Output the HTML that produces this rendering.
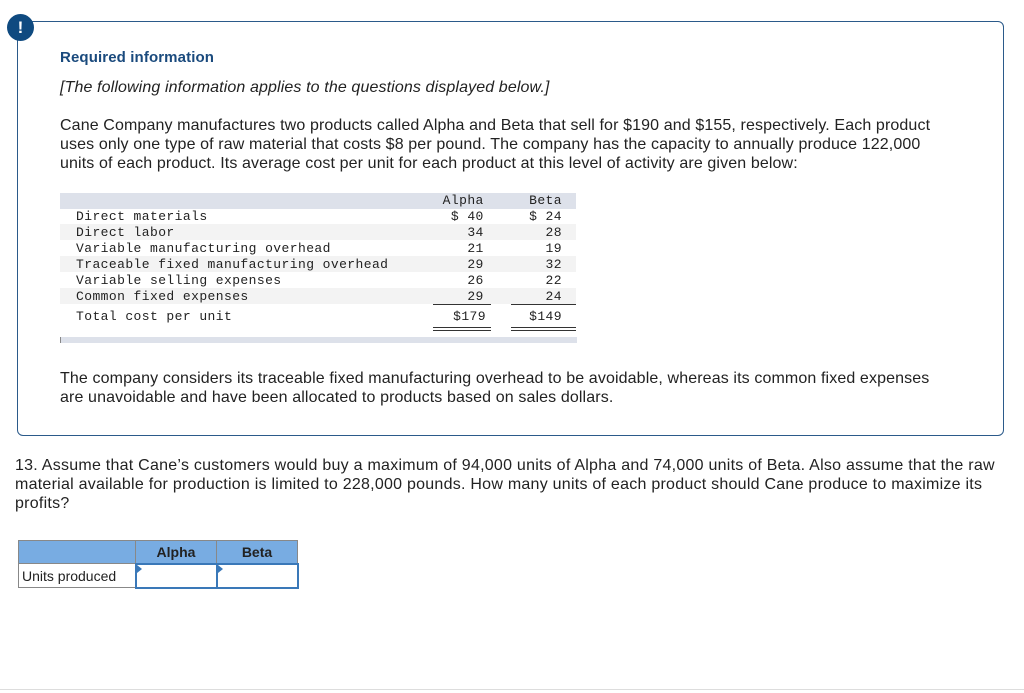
<!DOCTYPE html>
<html><head><style>
body{margin:0;width:1024px;height:693px;background:#fff;font-family:"Liberation Sans",sans-serif;color:#222;position:relative;overflow:hidden}
.box{position:absolute;left:17px;top:21px;width:985px;height:413px;border:1.5px solid #2b5a8a;border-radius:6px}
.icon{position:absolute;left:7px;top:14px;width:27px;height:27px;border-radius:50%;background:#0f4a80;color:#fff;font-weight:bold;font-size:17px;text-align:center;line-height:27px}
.t{position:absolute;font-size:16px;line-height:19px;letter-spacing:0.12px}
.mono{position:absolute;font-family:"Liberation Mono",monospace;font-size:13px;letter-spacing:0.42px;line-height:16px;color:#222}
.row{position:absolute;left:60px;width:516px;height:16px}
.ul{position:absolute;height:1px;background:#333}
table.a{position:absolute;left:18px;top:540px;border-collapse:collapse;font-size:14px}
table.a td{border:1.5px solid #888;padding:0}
</style></head><body>
<div class="box"></div>
<div class="icon">!</div>
<div class="t" style="left:60px;top:48px;font-weight:bold;color:#1a4a7d;font-size:15px">Required information</div>
<div class="t" style="left:60px;top:78px;font-style:italic">[The following information applies to the questions displayed below.]</div>
<div class="t" style="left:60px;top:116px;width:895px">Cane Company manufactures two products called Alpha and Beta that sell for $190 and $155, respectively. Each product uses only one type of raw material that costs $8 per pound. The company has the capacity to annually produce 122,000 units of each product. Its average cost per unit for each product at this level of activity are given below:</div>
<div class="row" style="top:193px;background:#dde1ea"></div>
<div class="row" style="top:224px;background:#f3f3f3"></div>
<div class="row" style="top:256px;background:#f3f3f3"></div>
<div class="row" style="top:288px;background:#f3f3f3"></div>
<div class="row" style="top:337px;height:6px;background:#dde1ea;border-left:1px solid #888"></div>
<div class="mono" style="left:76px;top:209px">Direct materials<br>Direct labor<br>Variable manufacturing overhead<br>Traceable fixed manufacturing overhead<br>Variable selling expenses<br>Common fixed expenses</div>
<div class="mono" style="left:76px;top:309px">Total cost per unit</div>
<div class="mono" style="left:430px;top:193px;width:62px;text-align:right;white-space:pre">Alpha 
$ 40 
34 
21 
29 
26 
29 </div>
<div class="mono" style="left:500px;top:193px;width:62px;text-align:right;white-space:pre">Beta
$ 24
28
19
32
22
24</div>
<div class="mono" style="left:430px;top:309px;width:56px;text-align:right">$179</div>
<div class="mono" style="left:500px;top:309px;width:62px;text-align:right">$149</div>
<div class="ul" style="left:433px;top:304px;width:58px"></div>
<div class="ul" style="left:511px;top:304px;width:65px"></div>
<div class="ul" style="left:433px;top:327px;width:58px"></div>
<div class="ul" style="left:433px;top:330px;width:58px"></div>
<div class="ul" style="left:511px;top:327px;width:65px"></div>
<div class="ul" style="left:511px;top:330px;width:65px"></div>
<div class="t" style="left:60px;top:369px;width:895px">The company considers its traceable fixed manufacturing overhead to be avoidable, whereas its common fixed expenses are unavoidable and have been allocated to products based on sales dollars.</div>
<div class="t" style="left:15px;top:456px;width:990px;letter-spacing:0.25px">13. Assume that Cane’s customers would buy a maximum of 94,000 units of Alpha and 74,000 units of Beta. Also assume that the raw material available for production is limited to 228,000 pounds. How many units of each product should Cane produce to maximize its profits?</div>
<table class="a">
<tr style="height:23px;background:#78ace2"><td style="width:116px"></td><td style="width:80px;text-align:center;font-weight:bold">Alpha</td><td style="width:80px;text-align:center;font-weight:bold">Beta</td></tr>
<tr style="height:24px"><td style="padding-left:3px">Units produced</td><td style="border:2px solid #3a78b8;position:relative"><span style="position:absolute;left:0;top:0;border-left:5px solid #3a78b8;border-top:4px solid transparent;border-bottom:4px solid transparent"></span></td><td style="border:2px solid #3a78b8;position:relative"><span style="position:absolute;left:0;top:0;border-left:5px solid #3a78b8;border-top:4px solid transparent;border-bottom:4px solid transparent"></span></td></tr>
</table>
<div style="position:absolute;left:0;top:689px;width:1024px;height:1px;background:#ddd"></div>
</body></html>
